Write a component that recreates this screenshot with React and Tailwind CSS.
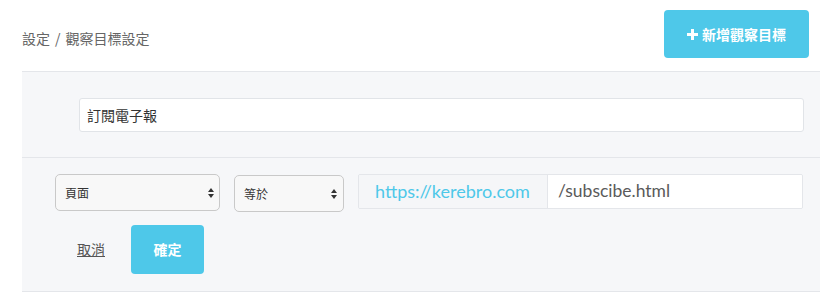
import React from "react";

const cjk = { fontFamily: '"Noto Sans CJK TC", "Noto Sans", sans-serif' };
const geo = { fontFamily: 'Lato, "Noto Sans CJK TC", sans-serif' };

function Arrows() {
  return (
    <svg width="6" height="10" viewBox="0 0 6 10" className="shrink-0">
      <path d="M3 0 L6 4 L0 4 Z" fill="#333" />
      <path d="M0 6 L6 6 L3 10 Z" fill="#333" />
    </svg>
  );
}

export default function App() {
  return (
    <div className="w-[820px] h-[295px] bg-white overflow-hidden" style={cjk}>
      <div className="flex items-start justify-between pl-[22px] pr-[11px] pt-[10px] mb-[13px]">
        <div className="mt-[18px] text-[14px] leading-[20px] text-[#666] flex">
          <span>設定</span>
          <span className="mx-[5px]">/</span>
          <span>觀察目標設定</span>
        </div>
        <button className="w-[145px] h-[48px] rounded-[4px] bg-[#4ec8e9] text-white text-[14px] font-bold flex items-center justify-center gap-[4px]">
          <svg width="11" height="11" viewBox="0 0 11 11">
            <rect x="4" y="0" width="3" height="11" fill="#fff" />
            <rect x="0" y="4" width="11" height="3" fill="#fff" />
          </svg>
          <span>新增觀察目標</span>
        </button>
      </div>
      <div className="ml-[22px] bg-[#f6f7f9] border-t border-b border-[#e4e6ea]">
        <div className="pt-[26px] pb-[25px] pl-[57px] pr-[16px]">
          <div className="h-[34px] bg-white border border-[#e1e4e8] rounded-[3px] flex items-center pl-[7px] text-[14px] text-[#333]">
            訂閱電子報
          </div>
        </div>
        <div className="border-t border-[#e4e6ea] pt-[16px] pb-[17px] pl-[33px] pr-[17px]">
          <div className="flex items-start">
            <div className="w-[165px] h-[37px] rounded-[5px] border border-[#c9c9c9] bg-[#f8f8f8] flex items-center justify-between pl-[9px] pr-[5px] text-[12px] text-[#333]">
              <span>頁面</span>
              <Arrows />
            </div>
            <div className="ml-[14px] mt-px w-[110px] h-[37px] rounded-[5px] border border-[#c9c9c9] bg-[#f8f8f8] flex items-center justify-between pl-[9px] pr-[6px] text-[12px] text-[#333]">
              <span>等於</span>
              <Arrows />
            </div>
            <div className="ml-[14px] flex-1 h-[35px] flex border border-[#e4e6ea] rounded-[2px] overflow-hidden">
              <div className="w-[189px] bg-[#f5f6f8] border-r border-[#e4e6ea] flex items-center pl-[16px] text-[18px] text-[#4ec8e9]" style={geo}>
                https://kerebro.com
              </div>
              <div className="flex-1 bg-white flex items-center pl-[10px] text-[17.5px] text-[#5a5a5a]" style={geo}>
                /subscibe.html
              </div>
            </div>
          </div>
          <div className="flex items-center mt-[13px]">
            <a className="ml-[22px] text-[14px] text-[#555] underline">取消</a>
            <button className="ml-[26px] w-[73px] h-[49px] rounded-[4px] bg-[#4ec8e9] text-white text-[14px] font-bold">確定</button>
          </div>
        </div>
      </div>
    </div>
  );
}
